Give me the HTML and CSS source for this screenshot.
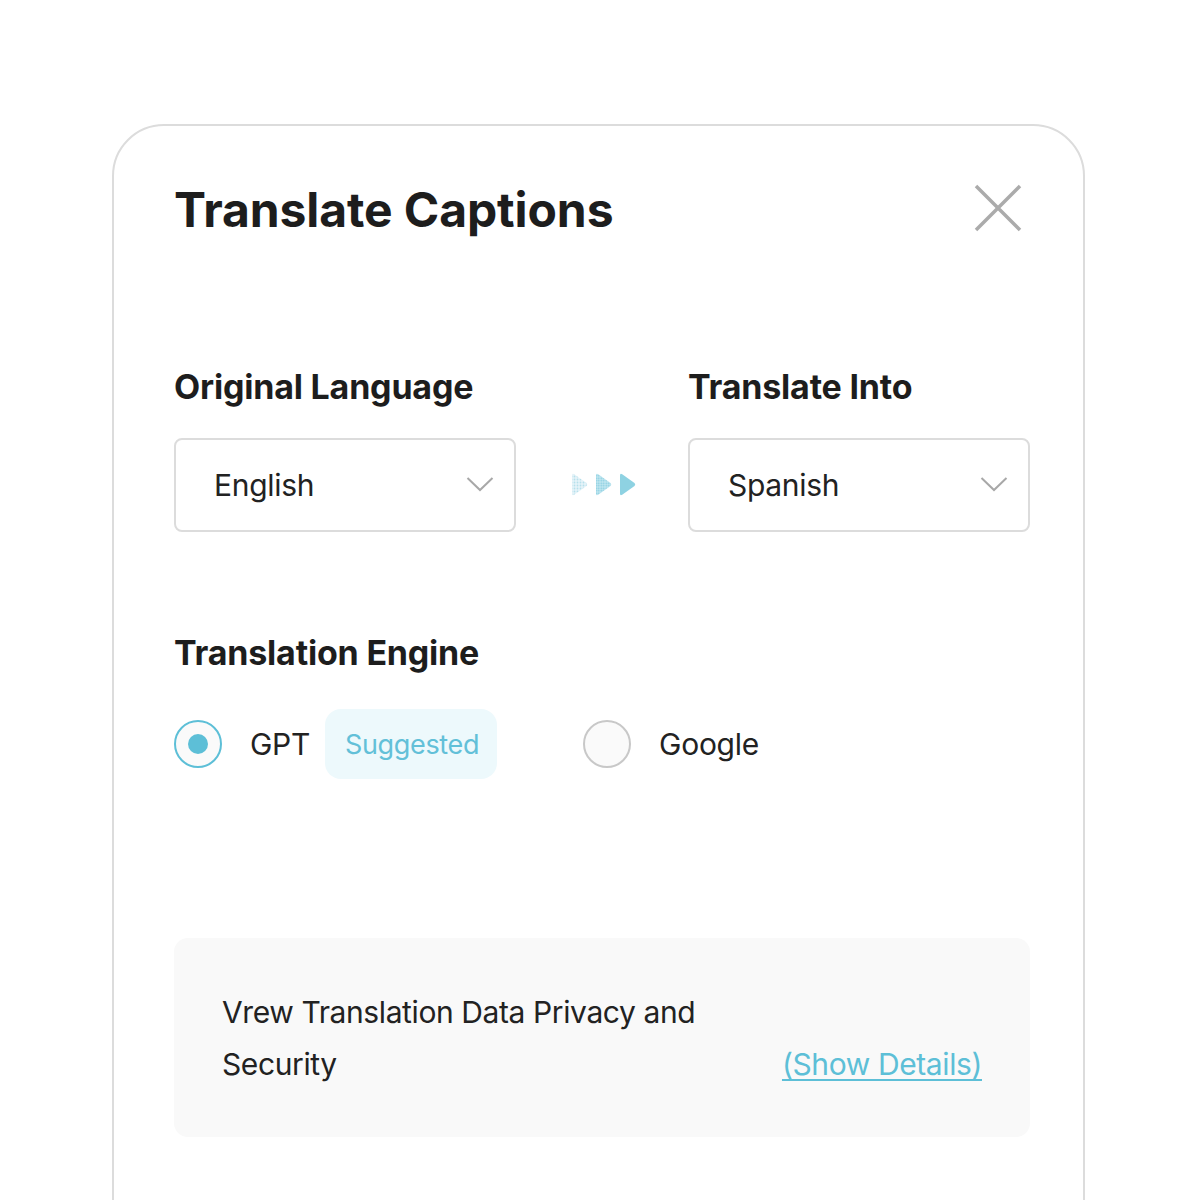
FILE: index.html
```html
<!DOCTYPE html>
<html lang="en">
<head>
<meta charset="utf-8">
<title>Translate Captions</title>
<link rel="stylesheet" href="styles.css">
</head>
<body>
<div class="card">
  <div class="title-row">
    <h1 class="title">Translate Captions</h1>
    <svg class="close" width="48" height="48" viewBox="0 0 48 48" aria-label="Close">
      <path d="M2 2 L46 46 M46 2 L2 46" stroke="#ababab" stroke-width="3.5" stroke-linecap="butt" fill="none"/>
    </svg>
  </div>

  <div class="lang-grid">
    <div class="label">Original Language</div>
    <div></div>
    <div class="label">Translate Into</div>

    <div class="select">
      <span class="select-text">English</span>
      <svg class="chev" width="28" height="16" viewBox="0 0 28 16"><path d="M1.5 2 L14 14 L26.5 2" stroke="#a8a8a8" stroke-width="2" fill="none"/></svg>
    </div>
    <div class="arrows">
      <svg width="70" height="26" viewBox="0 0 70 26">
        <defs>
          <pattern id="dots1" width="3" height="3" patternUnits="userSpaceOnUse">
            <rect width="3" height="3" fill="#e6f4f9"/>
            <circle cx="1.5" cy="1.5" r="0.9" fill="#b6e0ec"/>
          </pattern>
          <pattern id="dots2" width="2.5" height="2.5" patternUnits="userSpaceOnUse">
            <rect width="2.5" height="2.5" fill="#c4e8f1"/>
            <circle cx="1.25" cy="1.25" r="0.9" fill="#86cde0"/>
          </pattern>
        </defs>
        <path d="M2 3.5 Q2 1 4.2 2.3 L16.5 11 Q18 12.5 16.5 14 L4.2 22.7 Q2 24 2 21.5 Z" fill="url(#dots1)"/>
        <path d="M26 3.5 Q26 1 28.2 2.3 L40.5 11 Q42 12.5 40.5 14 L28.2 22.7 Q26 24 26 21.5 Z" fill="url(#dots2)"/>
        <path d="M50 3.5 Q50 1 52.2 2.3 L64.5 11 Q66 12.5 64.5 14 L52.2 22.7 Q50 24 50 21.5 Z" fill="#8ed2e2"/>
      </svg>
    </div>
    <div class="select">
      <span class="select-text">Spanish</span>
      <svg class="chev" width="28" height="16" viewBox="0 0 28 16"><path d="M1.5 2 L14 14 L26.5 2" stroke="#a8a8a8" stroke-width="2" fill="none"/></svg>
    </div>
  </div>

  <div class="label engine-label">Translation Engine</div>
  <div class="engine-row">
    <div class="option">
      <span class="radio checked"><span class="dot"></span></span>
      <span class="opt-text">GPT</span>
      <span class="badge">Suggested</span>
    </div>
    <div class="option">
      <span class="radio"></span>
      <span class="opt-text">Google</span>
    </div>
  </div>

  <div class="info">
    <p class="info-text">Vrew Translation Data Privacy and Security</p>
    <a class="info-link" href="#">(Show Details)</a>
  </div>
</div>
</body>
</html>
```
FILE: styles.css
```css
* { box-sizing: border-box; }
html, body { margin: 0; padding: 0; background: #ffffff; }
body {
  font-family: Inter, "Noto Sans", "Liberation Sans", sans-serif;
  color: #222222;
  height: 1200px;
  overflow: hidden;
}
.card {
  margin: 124px 0 0 112px;
  width: 973px;
  height: 1200px;
  border: 2px solid #dcdcdc;
  border-radius: 52px;
  padding: 57px 53px 0 60px;
  background: #fff;
}
.title-row {
  display: flex;
  justify-content: space-between;
  align-items: flex-start;
}
.title {
  margin: 3px 0 0 0;
  font-size: 48px;
  line-height: 48px;
  font-weight: 700;
  letter-spacing: -0.1px;
  color: #1d1d1d;
}
.close {
  margin: 1px 8px 0 0;
}
.lang-grid {
  margin-top: 136px;
  display: grid;
  grid-template-columns: 342px 1fr 342px;
  grid-template-rows: auto auto;
  row-gap: 34px;
}
.label {
  font-size: 34px;
  line-height: 34px;
  font-weight: 700;
  letter-spacing: -0.2px;
  color: #1d1d1d;
}
.select {
  height: 94px;
  border: 2px solid #dcdcdc;
  border-radius: 8px;
  display: flex;
  align-items: center;
  justify-content: space-between;
  padding: 0 20px 0 38px;
}
.select-text {
  font-size: 30px;
  letter-spacing: -0.3px;
  color: #222;
}
.chev { display: block; margin-top: -2px; }
.arrows {
  display: flex;
  align-items: center;
  justify-content: center;
  padding-left: 6px;
}
.arrows svg { display: block; }
.engine-label {
  margin-top: 104px;
}
.engine-row {
  margin-top: 39px;
  display: flex;
  align-items: center;
  gap: 86px;
}
.option {
  display: flex;
  align-items: center;
}
.radio {
  width: 48px;
  height: 48px;
  border-radius: 50%;
  border: 2.5px solid #c8c8c8;
  background: #fafafa;
  display: flex;
  align-items: center;
  justify-content: center;
  flex: none;
}
.radio.checked {
  border-color: #5dbfd7;
}
.dot {
  width: 20px;
  height: 20px;
  border-radius: 50%;
  background: #5dbfd7;
}
.opt-text {
  margin-left: 28px;
  font-size: 30px;
  letter-spacing: -0.3px;
  color: #222;
}
.badge {
  margin-left: 15px;
  height: 70px;
  padding: 0 18px 0 20px;
  display: flex;
  align-items: center;
  border-radius: 16px;
  background: #edf9fc;
  color: #62c0d8;
  font-size: 27px;
  letter-spacing: -0.35px;
}
.info {
  margin-top: 159px;
  height: 199px;
  background: #f9f9f9;
  border-radius: 14px;
  padding: 48px 48px 47px 48px;
  display: flex;
  align-items: flex-end;
  justify-content: space-between;
}
.info-text {
  margin: 0;
  max-width: 520px;
  font-size: 30px;
  line-height: 52px;
  letter-spacing: -0.4px;
  color: #222;
}
.info-link {
  font-size: 30px;
  line-height: 52px;
  letter-spacing: -0.4px;
  color: #5dbfd7;
  text-decoration: underline;
  text-underline-offset: 4px;
  text-decoration-thickness: 2px;
}
```
